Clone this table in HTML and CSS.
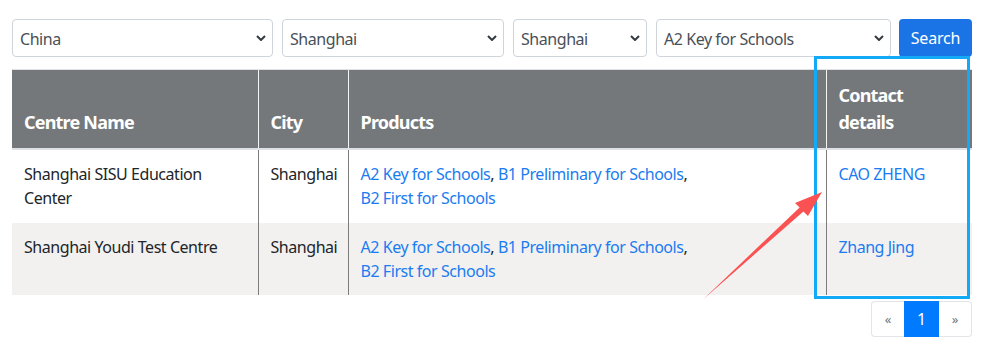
FILE: index.html
```html
<!DOCTYPE html>
<html lang="en">
<head>
<meta charset="utf-8">
<title>Centres</title>
<link rel="stylesheet" href="styles.css">
</head>
<body>
<div class="page">
  <form class="filters">
    <div class="select sel-country"><span>China</span><svg class="chev" viewBox="0 0 10 6" width="10" height="6"><path d="M1 1l4 4 4-4" fill="none" stroke="#343a40" stroke-width="2"/></svg></div>
    <div class="select sel-region"><span>Shanghai</span><svg class="chev" viewBox="0 0 10 6" width="10" height="6"><path d="M1 1l4 4 4-4" fill="none" stroke="#343a40" stroke-width="2"/></svg></div>
    <div class="select sel-city"><span>Shanghai</span><svg class="chev" viewBox="0 0 10 6" width="10" height="6"><path d="M1 1l4 4 4-4" fill="none" stroke="#343a40" stroke-width="2"/></svg></div>
    <div class="select sel-product"><span>A2 Key for Schools</span><svg class="chev" viewBox="0 0 10 6" width="10" height="6"><path d="M1 1l4 4 4-4" fill="none" stroke="#343a40" stroke-width="2"/></svg></div>
    <button type="button" class="btn-search">Search</button>
  </form>

  <table class="centres">
    <colgroup>
      <col class="c-name"><col class="c-city"><col class="c-prod"><col class="c-contact">
    </colgroup>
    <thead>
      <tr>
        <th>Centre Name</th>
        <th class="sep">City</th>
        <th class="sep">Products</th>
        <th class="sep">Contact details</th>
      </tr>
    </thead>
    <tbody>
      <tr>
        <td>Shanghai SISU Education Center</td>
        <td class="sep">Shanghai</td>
        <td class="sep"><a href="#">A2 Key for Schools</a>, <a href="#">B1 Preliminary for Schools</a>,<br><a href="#">B2 First for Schools</a></td>
        <td class="sep"><a href="#">CAO ZHENG</a></td>
      </tr>
      <tr class="alt">
        <td>Shanghai Youdi Test Centre</td>
        <td class="sep">Shanghai</td>
        <td class="sep"><a href="#">A2 Key for Schools</a>, <a href="#">B1 Preliminary for Schools</a>,<br><a href="#">B2 First for Schools</a></td>
        <td class="sep"><a href="#">Zhang Jing</a></td>
      </tr>
    </tbody>
  </table>

  <nav class="pager">
    <a class="pg pg-arrow" href="#">&laquo;</a>
    <a class="pg pg-active" href="#">1</a>
    <a class="pg pg-arrow" href="#">&raquo;</a>
  </nav>

  <div class="highlight"></div>
  <svg class="arrow" width="982" height="344" viewBox="0 0 982 344">
    <polygon points="703,299.5 799.6,207.4 795,203 822,192 808,216 803.4,211.6" fill="#fa5252"/>
  </svg>
</div>
</body>
</html>
```

FILE: styles.css
```css
* { box-sizing: border-box; }
html, body { margin: 0; padding: 0; background: #fff; }
body {
  font-family: "Noto Sans", "Open Sans", "Liberation Sans", sans-serif;
  color: #212529;
  font-size: 16px;
  line-height: 24px;
  letter-spacing: -0.45px;
}
.page {
  position: relative;
  width: 982px;
  height: 344px;
  padding: 19px 10px 0 12px;
}
.filters {
  display: flex;
  gap: 9px;
  height: 38px;
  margin: 0;
}
.select {
  display: flex;
  align-items: center;
  justify-content: space-between;
  height: 38px;
  border: 1px solid #ced4da;
  border-radius: 4px;
  padding: 2px 6px 0 7px;
  color: #495057;
  font-size: 16px;
  background: #fff;
}
.chev { flex: none; margin-top: -2px; }
.sel-country { width: 261px; }
.sel-region { width: 222px; }
.sel-city { width: 134px; }
.sel-product { width: 235px; }
.btn-search {
  width: 73px;
  height: 38px;
  border: 0;
  border-radius: 4px;
  background: #1b74e6;
  color: #fff;
  font: inherit;
  font-size: 16px;
  letter-spacing: -0.2px;
  padding: 0;
  margin-left: -1px;
}
.centres {
  width: 960px;
  margin-top: 12px;
  border-collapse: collapse;
  table-layout: fixed;
}
.c-name { width: 246px; }
.c-city { width: 90px; }
.c-prod { width: 478px; }
.c-contact { width: 146px; }
.centres th {
  background: #75787b;
  color: #fff;
  font-size: 18px;
  font-weight: 700;
  line-height: 27px;
  letter-spacing: -0.8px;
  text-align: left;
  vertical-align: bottom;
  padding: 12px;
  border-top: 1px solid #dee2e6;
  border-bottom: 2px solid #dee2e6;
}
.centres th.sep { border-left: 1px solid #f4f4f4; }
.centres td {
  padding: 12px;
  vertical-align: top;
  font-size: 16px;
  line-height: 24px;
}
.centres td.sep { border-left: 1px solid #7d7d7d; }
.centres tr.alt td { background: #f2f1f0; border-top: 1px solid #fff; }
.centres a { color: #1a7cf0; text-decoration: none; }
.pager {
  display: flex;
  justify-content: flex-end;
  margin-top: 6px;
  letter-spacing: 0;
}
.pg {
  display: flex;
  align-items: center;
  justify-content: center;
  height: 36px;
  text-decoration: none;
}
.pg-arrow {
  width: 33px;
  color: #6c757d;
  font-size: 13px;
  border: 1px solid #e3e5e8;
}
.pg-arrow:first-child { border-radius: 4px 0 0 4px; border-right: 0; }
.pg-arrow:last-child { border-radius: 0 4px 4px 0; border-left: 0; }
.pg-active {
  width: 35px;
  background: #007bff;
  color: #fff;
  font-size: 16px;
}
.highlight {
  position: absolute;
  left: 814px;
  top: 56px;
  width: 156px;
  height: 243px;
  border: 3.5px solid #12aaf7;
}
.arrow {
  position: absolute;
  left: 0;
  top: 0;
  pointer-events: none;
}
```
